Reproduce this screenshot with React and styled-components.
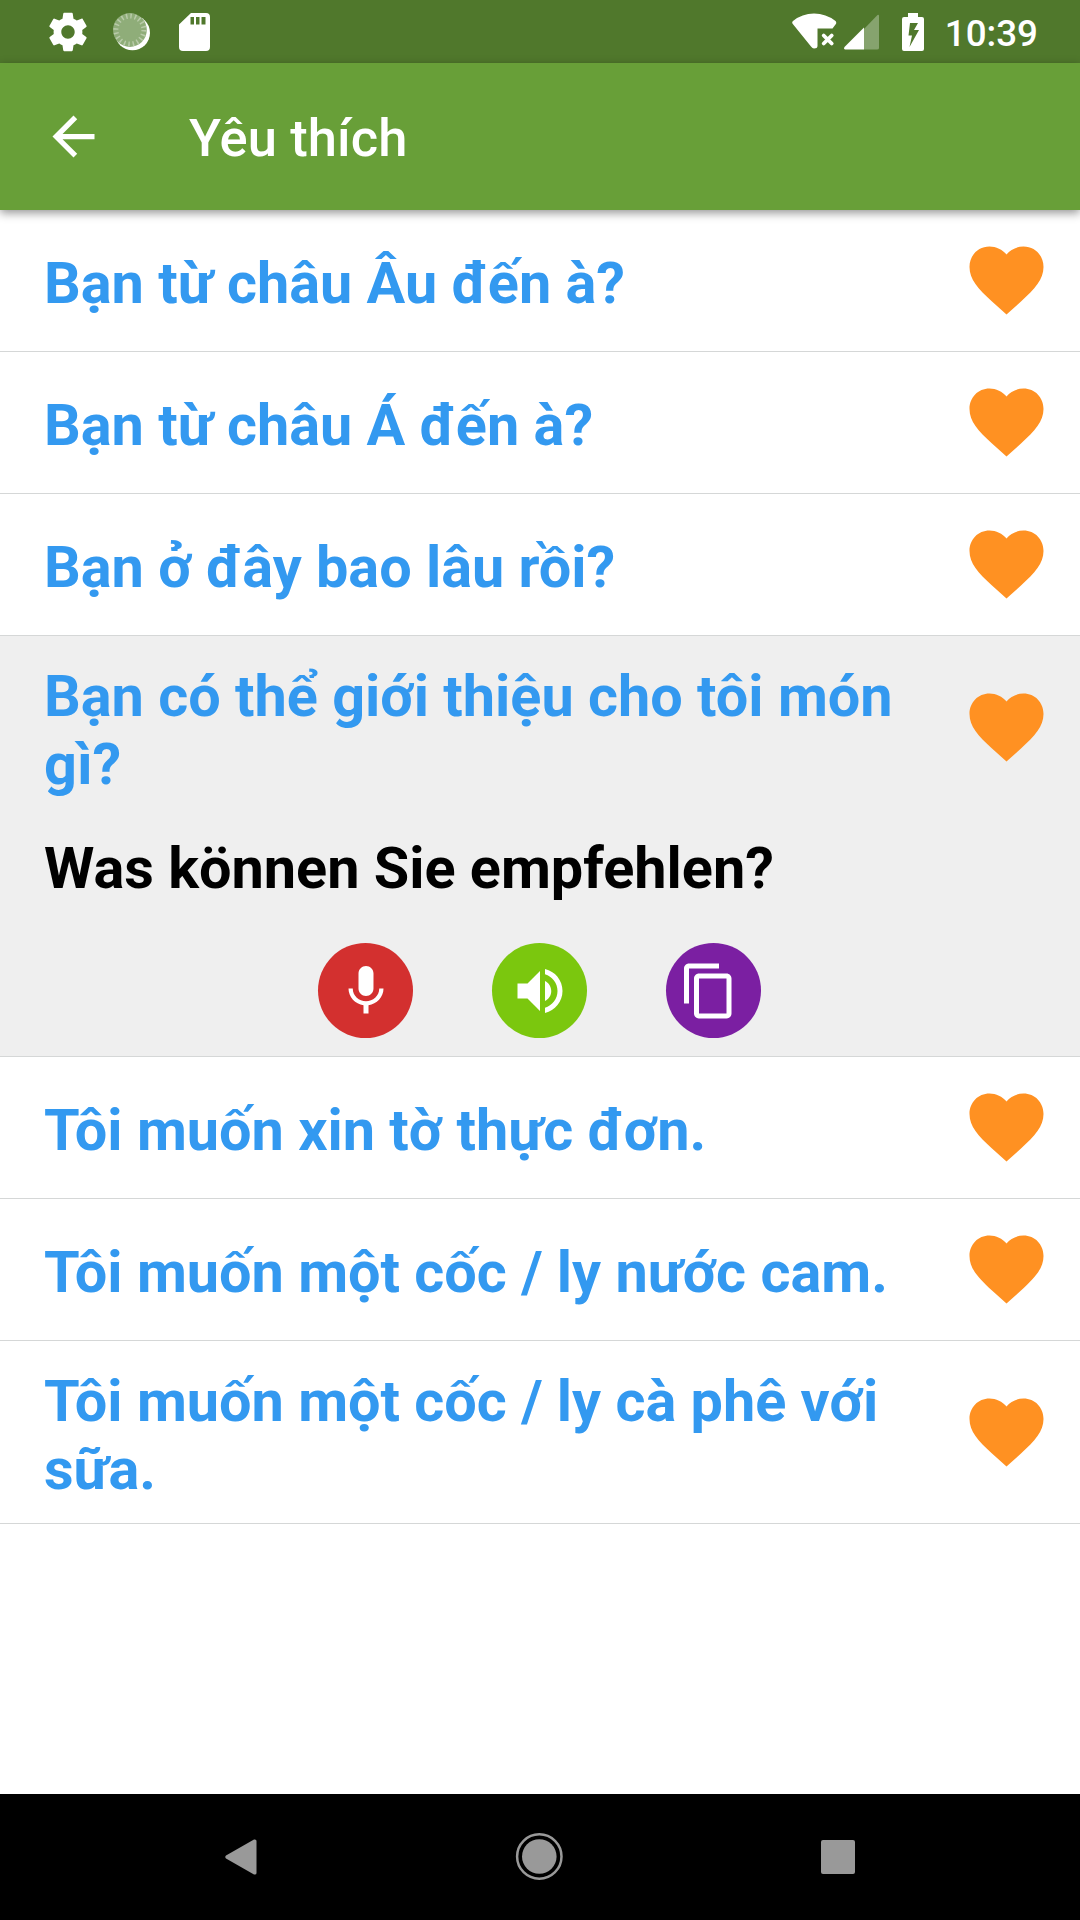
import React from "react";
import styled, { createGlobalStyle } from "styled-components";

const GlobalStyle = createGlobalStyle`
  body { margin: 0; background: #fff; }
  * { box-sizing: border-box; }
`;

const Screen = styled.div`
  width: 1080px;
  height: 1920px;
  display: flex;
  flex-direction: column;
  overflow: hidden;
  background: #fff;
  font-family: Roboto, "Noto Sans", sans-serif;
`;

const StatusBar = styled.header`
  height: 63px;
  flex: none;
  display: flex;
  justify-content: space-between;
  padding: 0 42px 0 45px;
  background: #50782c;
  color: #fff;
`;

const StatusGroup = styled.div`
  display: flex;
  align-items: center;
`;

const Glyph = styled.svg`
  display: block;
  flex: none;
  width: ${(p) => p.$w}px;
  height: ${(p) => p.$h || p.$w}px;
  margin-left: ${(p) => p.$ml || 0}px;
  margin-right: ${(p) => p.$mr || 0}px;
`;

const Clock = styled.time`
  margin: 5px 0 0 21px;
  font-size: 36.75px;
  font-weight: 500;
  line-height: 44px;
`;

const AppBar = styled.div`
  height: 147px;
  flex: none;
  display: flex;
  align-items: center;
  padding: 0 42px;
  background: #689f38;
  color: #fff;
  box-shadow: 0 3px 9px rgba(0, 0, 0, 0.42);
  z-index: 1;
`;

const BackButton = styled.button`
  border: 0;
  padding: 0;
  background: none;
  color: inherit;
`;

const Title = styled.h1`
  margin: 3px 0 0 84px;
  font-size: 52.5px;
  font-weight: 500;
  line-height: 62px;
  letter-spacing: 0.1px;
`;

const List = styled.ul`
  flex: 1;
  margin: 0;
  padding: 0;
  list-style: none;
`;

const Item = styled.li`
  display: flex;
  flex-direction: column;
  height: ${(p) => p.$height}px;
  border-bottom: 1px solid #d5d7d7;
  background: ${(p) => (p.$open ? "#efefef" : "#fff")};
`;

const Row = styled.div`
  display: flex;
  align-items: center;
  justify-content: space-between;
  height: ${(p) => p.$height}px;
  padding: 0 36px 0 44px;
`;

const Phrase = styled.p`
  width: 870px;
  margin: 7px 0 0;
  color: #3399f0;
  font-size: 57.6px;
  font-weight: 700;
  line-height: 68px;
`;

const Translation = styled(Phrase)`
  margin: 17px 0 0 44px;
  color: #000;
`;

const Actions = styled.div`
  display: flex;
  justify-content: center;
  gap: 79px;
  margin-top: 40px;
  padding-right: 1px;
`;

const Action = styled.button`
  width: 95px;
  height: 95px;
  padding: 0;
  border: 0;
  border-radius: 50%;
  display: flex;
  align-items: center;
  justify-content: center;
  background: ${(p) => p.$color};
`;

const NavBar = styled.nav`
  height: 126px;
  flex: none;
  display: flex;
  align-items: center;
  justify-content: space-between;
  padding: 0 225px;
  background: #000;
`;

const Heart = () => (
  <Glyph $w={75} $h={69} viewBox="0 0 75 69" fill="#ff9122">
    <path d="M37.5 68.5 23 55.500C9 42.500 .500 33.500 .500 21 .500 9.500 9 .5 20.500 .5 27 .5 33.500 3.500 37.500 8.500 41.500 3.500 48 .5 54.500 .5 66 .5 74.500 9.500 74.500 21 74.500 33.500 66 42.500 52 55.500Z" />
  </Glyph>
);

const Gear = () => (
  <Glyph $w={46} viewBox="0 0 24 24" fill="#fff">
    <path d="M19.430 12.980c.040-.320.070-.640.070-.980s-.030-.660-.070-.980l2.110-1.650c.190-.150.240-.420.120-.640l-2-3.460c-.120-.220-.390-.300-.610-.220l-2.490 1c-.520-.400-1.080-.730-1.690-.980l-.380-2.650C14.460 2.180 14.250 2 14 2h-4c-.250 0-.460.180-.490.420l-.380 2.650c-.610.250-1.170.590-1.690.980l-2.490-1c-.230-.090-.490 0-.610.220l-2 3.460c-.130.220-.070.490.120.640l2.110 1.650c-.040.320-.070.650-.070.980s.030.660.070.980l-2.110 1.650c-.190.150-.240.420-.120.640l2 3.460c.120.220.390.300.610.220l2.490-1c.520.400 1.080.730 1.690.980l.380 2.650c.030.240.240.420.490.420h4c.250 0 .460-.180.490-.420l.380-2.650c.610-.250 1.170-.590 1.690-.980l2.490 1c.230.090.490 0 .610-.220l2-3.460c.120-.220.070-.490-.120-.640l-2.110-1.650zM12 15.500c-1.930 0-3.500-1.570-3.500-3.500s1.570-3.500 3.500-3.500 3.500 1.570 3.500 3.500-1.570 3.500-3.500 3.500z" />
  </Glyph>
);

const Spinner = () => (
  <Glyph $w={40} $ml={21} $mr={27} viewBox="0 0 40 40">
    <circle cx="20.500" cy="20.800" r="17.500" fill="#fff" />
    <circle cx="17.900" cy="18" r="16.900" fill="#8fad79" />
    <circle cx="17.900" cy="18" r="14" fill="none" stroke="#b9cba9" strokeWidth="5" strokeDasharray="1.500 2.898" />
  </Glyph>
);

const SdCard = () => (
  <Glyph $w={31} $h={38} viewBox="0 0 31 38" fill="#fff">
    <path fillRule="evenodd" d="M12 0H27Q31 0 31 4V34Q31 38 27 38H4Q0 38 0 34V11.500ZM11.500 4V11.500H15V4ZM17 4V11.500H20.500V4ZM22.500 4V11.500H26.500V4Z" />
  </Glyph>
);

const Wifi = () => (
  <Glyph $w={45} $h={38} $mr={7} viewBox="0 0 45 38" fill="#fff">
    <path d="M1 8Q10 .500 22 .500T43.500 8Q45 9.500 43.500 11.500L40.500 15.500H25.500V33Q25.500 35.500 22 35.500Q20.500 35.500 19 33.500L.800 11Q-.5 9.500 1 8Z" />
    <path d="m31.700 22.500 8 8m0-8-8 8" stroke="#fff" strokeWidth="3.800" strokeLinecap="round" />
  </Glyph>
);

const Signal = () => (
  <Glyph $w={36} $h={36} $mr={22} viewBox="0 0 36 36" fill="#fff">
    <path d="M20 15 33.500 1Q35 0 35 2V34Q35 35.500 33 35.500H20Z" fill="#86a36e" />
    <path d="M20 13.500V35.500H1Q-1 34.500 1 32.500Z" />
  </Glyph>
);

const Battery = () => (
  <Glyph $w={22} $h={38} viewBox="0 0 22 38" fill="#fff">
    <path fillRule="evenodd" d="M6 0H16V4H20Q22 4 22 6V36Q22 38 20 38H2Q0 38 0 36V6Q0 4 2 4H6ZM8 10 6.500 22.500H10L7.500 34 17 17H12L16 10Z" />
  </Glyph>
);

const phrasesBefore = [
  ["Bạn từ châu Âu đến à?", 142],
  ["Bạn từ châu Á đến à?", 142],
  ["Bạn ở đây bao lâu rồi?", 142],
];
const phrasesAfter = [
  ["Tôi muốn xin tờ thực đơn.", 142],
  ["Tôi muốn một cốc / ly nước cam.", 142],
  ["Tôi muốn một cốc / ly cà phê với sữa.", 183],
];

const PhraseRow = ({ text, height }) => (
  <Row $height={height}>
    <Phrase>{text}</Phrase>
    <Heart />
  </Row>
);

const PhraseItem = ({ text, height }) => (
  <Item $height={height}>
    <PhraseRow text={text} height={height - 1} />
  </Item>
);

export default function App() {
  return (
    <Screen>
      <GlobalStyle />
      <StatusBar>
        <StatusGroup>
          <Gear />
          <Spinner />
          <SdCard />
        </StatusGroup>
        <StatusGroup>
          <Wifi />
          <Signal />
          <Battery />
          <Clock>10:39</Clock>
        </StatusGroup>
      </StatusBar>
      <AppBar>
        <BackButton aria-label="back">
          <Glyph $w={63} viewBox="0 0 24 24" fill="#fff">
            <path d="M20 11H7.830l5.590-5.590L12 4l-8 8 8 8 1.410-1.410L7.830 13H20v-2z" />
          </Glyph>
        </BackButton>
        <Title>Yêu thích</Title>
      </AppBar>
      <List>
        {phrasesBefore.map(([text, height]) => (
          <PhraseItem key={text} text={text} height={height} />
        ))}
        <Item $height={421} $open>
          <PhraseRow text="Bạn có thể giới thiệu cho tôi món gì?" height={182} />
          <Translation>Was können Sie empfehlen?</Translation>
          <Actions>
            <Action $color="#d3302f" aria-label="record">
              <Glyph $w={60} viewBox="0 0 24 24" fill="#fff">
                <path d="M12 14c1.660 0 2.990-1.340 2.990-3L15 5c0-1.660-1.340-3-3-3S9 3.340 9 5v6c0 1.660 1.340 3 3 3zm5.300-3c0 3-2.540 5.100-5.300 5.100S6.700 14 6.700 11H5c0 3.410 2.720 6.230 6 6.720V21h2v-3.280c3.280-.480 6-3.300 6-6.720h-1.700z" />
              </Glyph>
            </Action>
            <Action $color="#7bc70e" aria-label="speak">
              <Glyph $w={60} viewBox="0 0 24 24" fill="#fff">
                <path d="M3 9v6h4l5 5V4L7 9H3zm13.500 3c0-1.770-1.020-3.290-2.500-4.030v8.050c1.480-.730 2.500-2.250 2.500-4.020zM14 3.230v2.060c2.890.860 5 3.540 5 6.710s-2.110 5.850-5 6.710v2.060c4.010-.910 7-4.490 7-8.770s-2.990-7.860-7-8.770z" />
              </Glyph>
            </Action>
            <Action $color="#7b1fa2" aria-label="copy">
              <Glyph $w={60} $mr={9} viewBox="0 0 24 24" fill="#fff">
                <path d="M16 1H4c-1.100 0-2 .900-2 2v14h2V3h12V1zm3 4H8c-1.100 0-2 .900-2 2v14c0 1.100.900 2 2 2h11c1.100 0 2-.900 2-2V7c0-1.100-.900-2-2-2zm0 16H8V7h11v14z" />
              </Glyph>
            </Action>
          </Actions>
        </Item>
        {phrasesAfter.map(([text, height]) => (
          <PhraseItem key={text} text={text} height={height} />
        ))}
      </List>
      <NavBar>
        <Glyph $w={32} $h={36} viewBox="0 0 32 36" fill="#999">
          <path d="M1 16.500 29 .5Q31.500 0 31.500 2V34Q31.500 36 29 35.500L1 19.500Q-.5 18 1 16.500Z" />
        </Glyph>
        <Glyph $w={48} viewBox="0 0 48 48">
          <circle cx="24.300" cy="23.500" r="22.200" fill="none" stroke="#999" strokeWidth="2.500" />
          <circle cx="24.300" cy="23.500" r="17.300" fill="#999" />
        </Glyph>
        <Glyph $w={34} viewBox="0 0 34 34" fill="#999">
          <rect width="34" height="34" rx="2" />
        </Glyph>
      </NavBar>
    </Screen>
  );
}
